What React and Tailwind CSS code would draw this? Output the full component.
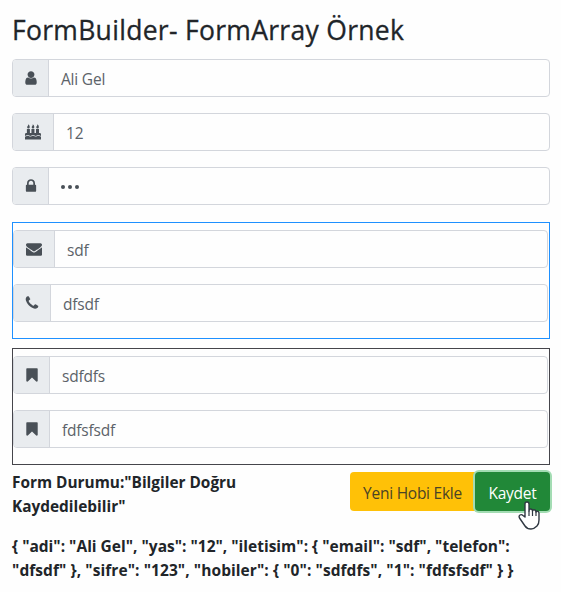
import React from "react";

const ICONS = {
  user: "M1536 1399q0 109-62.5 187t-150.5 78h-854q-88 0-150.5-78t-62.5-187q0-85 8.5-160.5t31.5-152 58.5-131 94-89 134.5-34.5q131 128 313 128t313-128q76 0 134.5 34.5t94 89 58.5 131 31.5 152 8.5 160.5zm-256-887q0 159-112.5 271.5t-271.5 112.5-271.5-112.5-112.5-271.5 112.5-271.5 271.5-112.5 271.5 112.5 112.5 271.5z",
  cake: "M0 1740v-330c90 0 140-80 300-80s200 80 300 80 140-80 300-80 200 80 300 80 140-80 300-80 200 80 292 80v330zM0 1330v-150q0-160 130-160h80V560h340v460h170V560h340v460h170V560h340v460h92q130 0 130 160v150c-90 0-140-80-292-80s-200 80-300 80-140-80-300-80-200 80-300 80-140-80-300-80-200 80-300 80zM385 500q-145 0-145-135c0-120 145-150 120-325 80 50 170 170 170 310q0 150-145 150zm510 0q-145 0-145-135c0-120 145-150 120-325 80 50 170 170 170 310q0 150-145 150zm510 0q-145 0-145-135c0-120 145-150 120-325 80 50 170 170 170 310q0 150-145 150z",
  lock: "M640 768h512v-192q0-106-75-181t-181-75-181 75-75 181v192zm832 96v576q0 40-28 68t-68 28h-960q-40 0-68-28t-28-68v-576q0-40 28-68t68-28h32v-192q0-184 132-316t316-132 316 132 132 316v192h32q40 0 68 28t28 68z",
  envelope: "M1792 710v794q0 66-47 113t-113 47h-1472q-66 0-113-47t-47-113v-794q44 49 101 87 362 246 497 345 57 42 92.5 65.5t94.5 48 110 24.5h2q51 0 110-24.5t94.5-48 92.5-65.5q170-123 498-345 57-39 100-87zm0-294q0 79-49 151t-122 123q-376 261-468 325-10 7-42.5 31t-54 38.5-52 32.5-57.5 27-50 9h-2q-23 0-50-9t-57.5-27-52-32.5-54-38.5-42.5-31q-91-64-262-182.5t-205-142.5q-62-42-117-115.5t-55-136.5q0-78 41.5-130t118.5-52h1472q65 0 112.5 47t47.5 113z",
  phone: "M1600 1240q0 27-10 70.5t-21 68.5q-21 50-122 106-94 51-186 51-27 0-53-3.5t-57.5-12.5-47-14.5-55.5-20.5-49-18q-98-35-175-83-127-79-264-216t-216-264q-48-77-83-175-3-9-18-49t-20.5-55.5-14.5-47-12.5-57.5-3.5-53q0-92 51-186 56-101 106-122 25-11 68.5-21t70.5-10q14 0 21 3 18 6 53 76 11 19 30 54t35 63.5 31 53.5q3 4 17.5 25t21.5 35.5 7 28.5q0 20-28.5 50t-62 55-62 53-28.5 46q0 9 5 22.5t8.5 20.5 14 24 11.5 19q76 137 174 235t235 174q2 1 19 11.5t24 14 20.5 8.5 22.5 5q18 0 46-28.5t53-62 55-62 50-28.5q14 0 28.5 7t35.5 21.5 25 17.5q25 15 53.5 31t63.5 35 54 30q70 35 76 53 3 7 3 21z",
  bookmark: "M1420 128q23 0 44 9 33 13 52.5 41t19.5 62v1289q0 34-19.5 62t-52.5 41q-19 8-44 8-48 0-83-32l-441-424-441 424q-36 33-83 33-23 0-44-9-33-13-52.5-41t-19.5-62v-1289q0-34 19.5-62t52.5-41q21-9 44-9h1048z",
};

function Field({ icon, width, children }) {
  return (
    <div className="flex h-[38px] w-full shrink-0 overflow-hidden rounded-[4px] border border-[#d3d6dc] bg-[#fefefe]">
      <div className={`flex shrink-0 items-center justify-center border-r border-[#d3d6dc] bg-[#e9ecef] ${width}`}>
        <svg viewBox="0 0 1792 1792" className="mb-px size-4 fill-[#495057]">
          <path d={ICONS[icon]} />
        </svg>
      </div>
      <div className="flex items-center pt-1 pl-3 text-[15.5px] tracking-[-0.2px] text-[#5c6369]">{children}</div>
    </div>
  );
}

function HandCursor() {
  return (
    <svg viewBox="0 0 24 30" className="absolute top-[28px] left-[42px] h-[30px] w-6">
      <path
        d="M8 17V4q0-2 2-2t2 2v7q0-2 1.7-2t1.8 2q.2-1.4 1.7-1.3T19 12q.2-1 1.5-.8T22 13v7q0 4-2 6-3 3-6 3-4 0-6-3l-5.5-8q-1-2 .5-3t3 .5z"
        className="fill-white stroke-[#303842]"
        strokeWidth="1.4"
        strokeLinejoin="round"
      />
      <path d="M12 11v5M15.5 11v5M19 12v4" className="fill-none stroke-[#303842]" strokeWidth="1.2" />
    </svg>
  );
}

export default function App() {
  return (
    <main className="h-[592px] w-[561px] overflow-hidden bg-[#fefefe] pr-[11px] pl-3 font-['Open_Sans','Noto_Sans',sans-serif] text-[#212529]">
      <h1 className="h-[59px] pt-[13px] text-[26.5px] leading-[34px] font-medium tracking-[0.3px] whitespace-nowrap [-webkit-text-stroke:0.3px_#212529]">
        <span>FormBuilder- FormArray Örnek</span>
      </h1>
      <form className="flex flex-col">
        <div className="flex flex-col gap-4">
          <Field icon="user" width="w-9"><span>Ali Gel</span></Field>
          <Field icon="cake" width="w-[41px]"><span>12</span></Field>
          <Field icon="lock" width="w-9">
            <span className="flex gap-[3px] pb-[3px]">
              <i className="size-1 rounded-full bg-[#495057]" />
              <i className="size-1 rounded-full bg-[#495057]" />
              <i className="size-1 rounded-full bg-[#495057]" />
            </span>
          </Field>
        </div>
        <section className="mt-[17px] flex h-[117px] flex-col gap-4 border border-[#1e90ff] pt-[7px] pr-px">
          <Field icon="envelope" width="w-[41px]"><span>sdf</span></Field>
          <Field icon="phone" width="w-[37px]"><span>dfsdf</span></Field>
        </section>
        <section className="mt-[9px] flex h-[117px] flex-col gap-4 border border-[#45454b] pt-[7px] pr-px">
          <Field icon="bookmark" width="w-9"><span>sdfdfs</span></Field>
          <Field icon="bookmark" width="w-9"><span>fdfsfsdf</span></Field>
        </section>
        <div className="mt-[6px] flex h-[63px] justify-between">
          <p className="text-[15.4px] leading-6 font-bold whitespace-nowrap">
            <span>Form Durumu:"Bilgiler Doğru</span><br />
            <span>Kaydedilebilir"</span>
          </p>
          <div className="mt-px flex h-[39px] text-[15.5px] tracking-[-0.25px]">
            <button type="button" className="w-[125px] rounded-l-[4px] bg-[#ffc107] pt-1 whitespace-nowrap text-[#4a4326]">
              <span>Yeni Hobi Ekle</span>
            </button>
            <button type="button" className="relative w-[75px] rounded-[4px] bg-[#218838] pt-1 text-white shadow-[0_0_0_2px_#a3dcb3]">
              <span>Kaydet</span>
              <HandCursor />
            </button>
          </div>
        </div>
      </form>
      <p className="text-[15.5px] leading-6 font-bold whitespace-nowrap">
        <span>{'{ "adi": "Ali Gel", "yas": "12", "iletisim": { "email": "sdf", "telefon":'}</span><br />
        <span className="tracking-[0.07px]">{'"dfsdf" }, "sifre": "123", "hobiler": { "0": "sdfdfs", "1": "fdfsfsdf" } }'}</span>
      </p>
    </main>
  );
}
